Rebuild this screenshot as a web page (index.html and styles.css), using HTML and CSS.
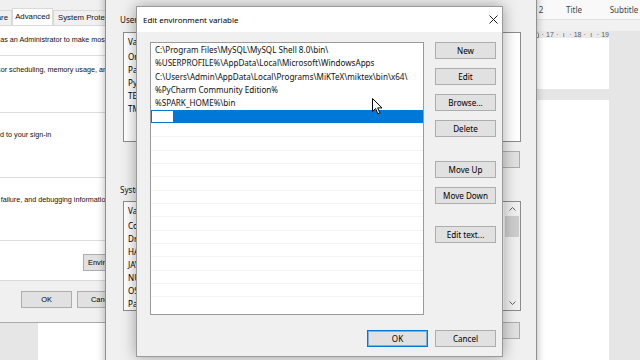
FILE: index.html
```html
<!DOCTYPE html>
<html lang="en">
<head>
  <meta charset="UTF-8" />
  <meta name="viewport" content="width=device-width, initial-scale=1.0" />
  <title>Edit environment variable</title>
  <link rel="stylesheet" href="styles.css">
</head>
<body>
  <div class="desktop">

    <!-- word document behind everything -->
    <div class="word">
      <div class="ribbon-styles">
        <div class="ribbon-groups"></div>
        <div class="style-cell">Normal</div>
        <div class="style-cell">No Spacing</div>
        <div class="style-cell">Heading 1</div>
        <div class="style-cell">Heading 2</div>
        <div class="style-cell">Title</div>
        <div class="style-cell">Subtitle</div>
      </div>
      <div class="ribbon-bottom"></div>
      <div class="ruler">
        <div class="ruler-strip">
          <span class="tick">·</span><span class="tick">16</span><span class="tick">·</span><span class="tick">ı</span><span class="tick">·</span>
          <span class="tick"><svg width="6" height="7" viewBox="0 0 6 7"><path d="M0.5 6.5V3L3 0.5L5.5 3V6.5Z" fill="#fff" stroke="#888"/></svg></span>
          <span class="tick">·</span><span class="tick">17</span><span class="tick">·</span><span class="tick">ı</span><span class="tick">·</span><span class="tick">18</span><span class="tick">·</span><span class="tick">ı</span><span class="tick">·</span><span class="tick">19</span>
        </div>
      </div>
      <div class="doc">
        <div class="page page-first"></div>
        <div class="page page-next"></div>
      </div>
    </div>

    <!-- System Properties -->
    <div class="win sysprops">
      <div class="tabs">
        <div class="tab tab-cn">Computer Name</div>
        <div class="tab tab-hw">Hardware</div>
        <div class="tab tab-on">Advanced</div>
        <div class="tab tab-sp">System Protection</div>
        <div class="tab">Remote</div>
      </div>
      <div class="tab-page">
        <p class="note">You must be logged on as an Administrator to make most of these changes.</p>
        <div class="group g-perf">
          <p>Visual effects, processor scheduling, memory usage, and virtual memory</p>
        </div>
        <div class="group g-prof">
          <p>Desktop settings related to your sign-in</p>
        </div>
        <div class="group g-start">
          <p>System startup, system failure, and debugging information</p>
        </div>
        <div class="env-row"><button class="btn btn-env">Environment Variables...</button></div>
      </div>
      <div class="sys-footer">
        <button class="btn btn-sys">OK</button>
        <button class="btn btn-sys">Cancel</button>
        <button class="btn btn-sys">Apply</button>
      </div>
    </div>

    <!-- Environment Variables -->
    <div class="win envvars">
      <div class="env-title">Environment Variables</div>
      <div class="env-body">
        <div class="env-label">User variables for Admin</div>
        <div class="listview lv-user">
          <div class="lv-rows">
            <div class="lv-head"><span class="c1">Variable</span><span class="c2">Value</span></div>
            <div class="lv-row"><span class="c1">OneDrive</span><span class="c2">C:\Users\Admin\OneDrive</span></div>
            <div class="lv-row"><span class="c1">Path</span><span class="c2">C:\Program Files\MySQL\MySQL Shell 8.0\bin\;...</span></div>
            <div class="lv-row"><span class="c1">PyCharm Community Edition</span><span class="c2">C:\Program Files\JetBrains\PyCharm</span></div>
            <div class="lv-row"><span class="c1">TEMP</span><span class="c2">%USERPROFILE%\AppData\Local\Temp</span></div>
            <div class="lv-row"><span class="c1">TMP</span><span class="c2">%USERPROFILE%\AppData\Local\Temp</span></div>
          </div>
        </div>
        <div class="env-btns">
          <button class="btn btn-env-action">New...</button>
          <button class="btn btn-env-action">Edit...</button>
          <button class="btn btn-env-action">Delete</button>
        </div>
        <div class="env-label sys-label">System variables</div>
        <div class="listview lv-sys">
          <div class="lv-rows">
            <div class="lv-head"><span class="c1">Variable</span><span class="c2">Value</span></div>
            <div class="lv-row"><span class="c1">ComSpec</span><span class="c2">C:\Windows\system32\cmd.exe</span></div>
            <div class="lv-row"><span class="c1">DriverData</span><span class="c2">C:\Windows\System32\Drivers\DriverData</span></div>
            <div class="lv-row"><span class="c1">HADOOP_HOME</span><span class="c2">C:\hadoop</span></div>
            <div class="lv-row"><span class="c1">JAVA_HOME</span><span class="c2">C:\Java\jdk1.8.0</span></div>
            <div class="lv-row"><span class="c1">NUMBER_OF_PROCESSORS</span><span class="c2">4</span></div>
            <div class="lv-row"><span class="c1">OS</span><span class="c2">Windows_NT</span></div>
            <div class="lv-row"><span class="c1">Path</span><span class="c2">C:\Windows\system32;C:\Windows</span></div>
          </div>
          <div class="scrollbar">
            <div class="sb-arrow"><svg width="7" height="4" viewBox="0 0 7 4"><path d="M0.5 3.5L3.5 0.5L6.5 3.5" fill="none" stroke="#606060"/></svg></div>
            <div class="sb-thumb"></div>
            <div class="sb-track"></div>
            <div class="sb-arrow"><svg width="7" height="4" viewBox="0 0 7 4"><path d="M0.5 0.5L3.5 3.5L6.5 0.5" fill="none" stroke="#606060"/></svg></div>
          </div>
        </div>
        <div class="env-btns sys-btns">
          <button class="btn btn-env-action">New...</button>
          <button class="btn btn-env-action">Edit...</button>
          <button class="btn btn-env-action">Delete</button>
        </div>
      </div>
    </div>

    <!-- Edit environment variable dialog -->
    <div class="win dialog">
      <div class="dlg-title">
        <span class="dlg-caption">Edit environment variable</span>
        <span class="dlg-close">
          <svg width="9" height="9" viewBox="0 0 9 9"><path d="M0.5 0.5L8.5 8.5M8.5 0.5L0.5 8.5" stroke="#222" stroke-width="1"/></svg>
        </span>
      </div>
      <div class="dlg-body">
        <div class="path-list">
          <div class="path-row">C:\Program Files\MySQL\MySQL Shell 8.0\bin\</div>
          <div class="path-row">%USERPROFILE%\AppData\Local\Microsoft\WindowsApps</div>
          <div class="path-row">C:\Users\Admin\AppData\Local\Programs\MiKTeX\miktex\bin\x64\</div>
          <div class="path-row">%PyCharm Community Edition%</div>
          <div class="path-row">%SPARK_HOME%\bin</div>
          <div class="path-row selected"><span class="edit-box"></span></div>
          <div class="path-row empty"></div>
          <div class="path-row empty"></div>
          <div class="path-row empty"></div>
          <div class="path-row empty"></div>
          <div class="path-row empty"></div>
          <div class="path-row empty"></div>
          <div class="path-row empty"></div>
          <div class="path-row empty"></div>
          <div class="path-row empty"></div>
          <div class="path-row empty"></div>
          <div class="path-row empty"></div>
          <div class="path-row empty"></div>
          <div class="path-row empty"></div>
          <div class="path-row empty"></div>
        </div>
        <div class="dlg-buttons">
          <button class="btn">New</button>
          <button class="btn">Edit</button>
          <button class="btn">Browse...</button>
          <button class="btn">Delete</button>
          <button class="btn btn-gap">Move Up</button>
          <button class="btn">Move Down</button>
          <button class="btn btn-gap2">Edit text...</button>
        </div>
      </div>
      <div class="dlg-footer">
        <button class="btn btn-default">OK</button>
        <button class="btn">Cancel</button>
      </div>
    </div>

    <svg class="cursor" width="11" height="17" viewBox="0 0 11 17">
      <path d="M0.5 0.5V13.5L3.6 10.6L5.9 15.8L7.9 14.9L5.7 9.9H10Z" fill="#fff" stroke="#000" stroke-width="1" stroke-linejoin="round"/>
    </svg>
  </div>
</body>
</html>
```

FILE: styles.css
```css
* {
  box-sizing: border-box;
}
body {
  margin: 0;
  font-family: "Noto Sans", "DejaVu Sans", sans-serif;
  font-size: 8.1px;
  color: #000;
}
p {
  margin: 0;
}
.desktop {
  position: relative;
  width: 640px;
  height: 360px;
  overflow: hidden;
  background: #e6e6e6;
}

/* word in the background */
.word {
  position: absolute;
  inset: 0;
  display: flex;
  flex-direction: column;
  background: #e6e6e6;
}
.ribbon-styles {
  display: flex;
  height: 20px;
  background: #f9f9f9;
  border-bottom: 1px solid #e2e2e2;
  color: #444;
}
.ribbon-groups {
  flex: 0 0 349px;
}
.style-cell {
  flex: 0 0 50px;
  text-align: center;
  line-height: 20px;
  white-space: nowrap;
  font-size: 8px;
}
.ribbon-bottom {
  height: 22px;
  background: #f1f1f1;
}
.ruler {
  height: 14px;
  padding-left: 38px;
}
.ruler-strip {
  width: 571px;
  height: 100%;
  background: #eaeaea;
  display: flex;
  justify-content: flex-end;
  align-items: center;
  color: #606060;
  font-family: "Liberation Sans", Arial, sans-serif;
  font-size: 7px;
}
.tick {
  flex: 0 0 6.6px;
  text-align: center;
  display: flex;
  justify-content: center;
  white-space: nowrap;
}
.doc {
  flex: 1;
  padding-left: 38px;
}
.page {
  width: 571px;
  background: #fff;
}
.page-first {
  height: 51px;
  margin-bottom: 11px;
}
.page-next {
  height: 260px;
}

/* windows */
.win {
  position: absolute;
}
.btn {
  display: block;
  height: 17px;
  padding: 0;
  background: #e1e1e1;
  border: 1px solid #adadad;
  font-family: inherit;
  font-size: 8.1px;
  color: #000;
  line-height: 15px;
  text-align: center;
  white-space: nowrap;
  overflow: hidden;
}

/* system properties */
.sysprops {
  left: -110px;
  top: -1px;
  width: 310px;
  height: 324px;
  background: #f0f0f0;
  border: 1px solid #aaa;
  display: flex;
  flex-direction: column;
  font-family: "Liberation Sans", Arial, sans-serif;
  font-size: 7.2px;
}
.sysprops .btn {
  font-family: "Liberation Sans", Arial, sans-serif;
  font-size: 7.4px;
}
.tabs {
  display: flex;
  align-items: flex-end;
  height: 17px;
  margin-top: 8px;
  padding-left: 6px;
  font-size: 7.8px;
}
.tab {
  height: 15px;
  line-height: 14px;
  border: 1px solid #d9d9d9;
  border-bottom: none;
  text-align: center;
  white-space: nowrap;
  overflow: hidden;
  color: #111;
}
.tab-cn {
  width: 67px;
}
.tab-hw {
  width: 48px;
  text-align: right;
  padding-right: 3px;
}
.tab-on {
  width: 41px;
  height: 17px;
  line-height: 16px;
  background: #fff;
}
.tab-sp {
  width: 68px;
  text-align: left;
  padding-left: 4px;
}
.tab-page {
  height: 256px;
  margin: 0 7px;
  background: #fff;
  border: 1px solid #d9d9d9;
  color: #111;
}
.tab-page p {
  line-height: 10px;
  white-space: nowrap;
}
.note {
  margin-top: 9px !important;
  padding-left: 26px;
}
.group {
  margin: 0 8px;
  padding-left: 19px;
  border: 1px solid #dcdcdc;
  border-bottom: none;
}
.g-perf {
  margin-top: 10px;
  height: 57px;
  padding-top: 9px;
  padding-left: 21px;
}
.g-prof {
  height: 65px;
  padding-top: 17px;
}
.g-start {
  height: 64px;
  padding-top: 17px;
  padding-left: 16px;
  border-bottom: 1px solid #dcdcdc;
}
.env-row {
  display: flex;
  justify-content: flex-end;
  padding: 0 8px;
  margin-top: 13px;
}
.btn-env {
  width: 100px;
  text-align: left;
  padding-left: 4px;
}
.sys-footer {
  flex: 1;
  display: flex;
  justify-content: flex-end;
  gap: 5px;
  padding: 10px 15px 0 0;
}
.btn-sys {
  width: 51px;
}

/* environment variables */
.envvars {
  left: 105px;
  top: -31px;
  width: 432px;
  height: 420px;
  background: #f0f0f0;
  border: 1px solid #8f8f8f;
  box-shadow: 0 0 8px rgba(0, 0, 0, 0.3);
}
.env-title {
  height: 30px;
  background: #fff;
  padding-left: 8px;
  line-height: 30px;
}
.env-body {
  padding: 0 15px 0 14px;
}
.env-label {
  margin-top: 15px;
  line-height: 10px;
  color: #111;
}
.sys-label {
  margin-top: 17px;
}
.listview {
  display: flex;
  height: 110px;
  margin: 7px 0 0 3px;
  background: #fff;
  border: 1px solid #8c8c8c;
  overflow: hidden;
}
.lv-sys {
  margin-top: 6px;
}
.lv-rows {
  flex: 1;
  overflow: hidden;
}
.lv-head,
.lv-row {
  display: flex;
  white-space: nowrap;
}
.lv-head {
  height: 17px;
  line-height: 17px;
}
.lv-row {
  height: 13px;
  line-height: 13px;
}
.c1 {
  flex: 0 0 150px;
  padding-left: 4px;
  overflow: hidden;
}
.c2 {
  overflow: hidden;
}
.scrollbar {
  flex: 0 0 16px;
  display: flex;
  flex-direction: column;
  background: #f0f0f0;
}
.sb-arrow {
  height: 14px;
  display: flex;
  align-items: center;
  justify-content: center;
}
.sb-thumb {
  height: 21px;
  margin: 0 1px;
  background: #cdcdcd;
}
.sb-track {
  flex: 1;
}
.env-btns {
  display: flex;
  justify-content: flex-end;
  gap: 8px;
  margin-top: 9px;
  padding-right: 1px;
}
.sys-btns {
  margin-top: 11px;
}
.btn-env-action {
  width: 65px;
}

/* edit environment variable dialog */
.dialog {
  left: 136px;
  top: 6px;
  width: 367px;
  height: 351px;
  background: #f0f0f0;
  border: 1px solid #9a9a9a;
  box-shadow: 0 0 14px rgba(0, 0, 0, 0.35);
  display: flex;
  flex-direction: column;
}
.dlg-title {
  height: 25px;
  background: #fff;
  display: flex;
  align-items: center;
  justify-content: space-between;
  padding-left: 6px;
}
.dlg-caption {
  font-size: 7.9px;
}
.dlg-close {
  width: 18px;
  display: flex;
  justify-content: center;
}
.dlg-body {
  display: flex;
  padding: 10px 6px 0 13px;
}
.path-list {
  width: 274px;
  height: 273px;
  background: #fff;
  border: 1px solid #9a9a9a;
  overflow: hidden;
}
.path-row {
  height: 13.33px;
  line-height: 13.33px;
  padding-left: 4px;
  white-space: nowrap;
  color: #111;
}
.path-row.selected {
  background: #0078d7;
  padding: 1px 0 1px 1px;
}
.edit-box {
  display: block;
  width: 21px;
  height: 100%;
  background: #fff;
}
.path-row.empty {
  border-top: 1px solid #f4f4f4;
}
.dlg-buttons {
  display: flex;
  flex-direction: column;
  gap: 9px;
  width: 61px;
  margin-left: 11px;
}
.dlg-buttons .btn {
  width: 61px;
}
.dlg-buttons .btn-gap {
  margin-top: 15px;
}
.dlg-buttons .btn-gap2 {
  margin-top: 13px;
}
.dlg-footer {
  display: flex;
  justify-content: flex-end;
  gap: 7px;
  padding: 15px 6px 0 0;
}
.dlg-footer .btn {
  width: 61px;
}
.btn-default {
  border-color: #0078d7;
  box-shadow: inset 0 0 0 1px rgba(0, 120, 215, 0.45);
}

.cursor {
  position: absolute;
  left: 372px;
  top: 98px;
}
```
